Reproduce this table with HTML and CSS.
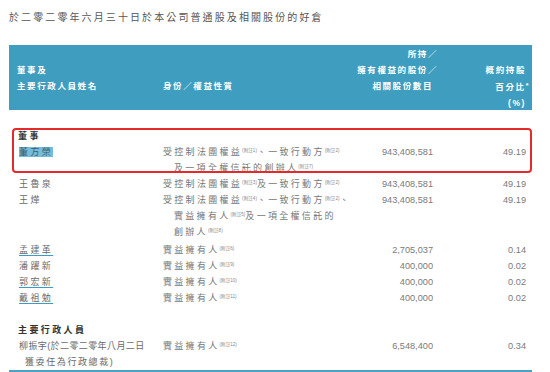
FILE: index.html
```html
<!DOCTYPE html>
<html lang="zh-Hant">
<head>
<meta charset="utf-8">
<link rel="stylesheet" href="styles.css">
</head>
<body>
<div class="sheet">
  <h1 class="title">於二零二零年六月三十日於本公司普通股及相關股份的好倉</h1>

  <div class="head">
    <div class="h-name">董事及<br>主要行政人員姓名</div>
    <div class="h-role">身份／權益性質</div>
    <div class="h-shares">所持<span class="sl">／</span><br>擁有權益的股份<span class="sl">／</span><br>相關股份數目</div>
    <div class="h-pct">概約持股<br>百分比<span class="ast">*</span><br>(%)</div>
  </div>

  <div class="body">
    <div class="section">董事</div>
    <div class="row">
      <div class="name"><span class="hl">董方榮</span></div>
      <div class="role">受控制法團權益<sup>(附註1)</sup>、一致行動方<sup>(附註2)</sup><br>及一項全權信託的創辦人<sup>(附註7)</sup></div>
      <div class="num">943,408,581</div>
      <div class="pct">49.19</div>
    </div>
    <div class="row">
      <div class="name">王魯泉</div>
      <div class="role">受控制法團權益<sup>(附註3)</sup>及一致行動方<sup>(附註2)</sup></div>
      <div class="num">943,408,581</div>
      <div class="pct">49.19</div>
    </div>
    <div class="row">
      <div class="name">王燁</div>
      <div class="role">受控制法團權益<sup>(附註4)</sup>、一致行動方<sup>(附註2)</sup>、<br>實益擁有人<sup>(附註5)</sup>及一項全權信託的<br>創辦人<sup>(附註8)</sup></div>
      <div class="num">943,408,581</div>
      <div class="pct">49.19</div>
    </div>
    <div class="row gap-top">
      <div class="name"><span class="ul">孟建革</span></div>
      <div class="role">實益擁有人<sup>(附註6)</sup></div>
      <div class="num">2,705,037</div>
      <div class="pct">0.14</div>
    </div>
    <div class="row">
      <div class="name">潘躍新</div>
      <div class="role">實益擁有人<sup>(附註9)</sup></div>
      <div class="num">400,000</div>
      <div class="pct">0.02</div>
    </div>
    <div class="row">
      <div class="name"><span class="ul">郭宏新</span></div>
      <div class="role">實益擁有人<sup>(附註10)</sup></div>
      <div class="num">400,000</div>
      <div class="pct">0.02</div>
    </div>
    <div class="row">
      <div class="name"><span class="ul">戴祖勉</span></div>
      <div class="role">實益擁有人<sup>(附註11)</sup></div>
      <div class="num">400,000</div>
      <div class="pct">0.02</div>
    </div>

    <div class="section section-2">主要行政人員</div>
    <div class="row">
      <div class="name name-long"><span class="tight">柳振宇(於二零二零年八月二日</span><br>獲委任為行政總裁)</div>
      <div class="role">實益擁有人<sup>(附註12)</sup></div>
      <div class="num">6,548,400</div>
      <div class="pct">0.34</div>
    </div>
  </div>

  <div class="mark"></div>
</div>
</body>
</html>
```

FILE: styles.css
```css
html, body {
  margin: 0;
  padding: 0;
  background: #ffffff;
}

body {
  font-family: "Liberation Sans", "Noto Sans CJK TC", sans-serif;
  color: #6f6f6f;
}

.sheet {
  position: relative;
  width: 550px;
  height: 372px;
  overflow: hidden;
}

.title {
  margin: 0;
  padding: 10px 0 0 9px;
  height: 16px;
  line-height: 16px;
  font-size: 10px;
  font-weight: normal;
  letter-spacing: 2.1px;
  color: #555555;
  white-space: nowrap;
}

.head {
  margin: 19px 18px 0 9px;
  height: 65px;
  box-sizing: border-box;
  padding-top: 1px;
  background: #3f9ebf;
  color: #ffffff;
  display: grid;
  grid-template-columns: 154px 180px 90px 93px;
  grid-template-rows: repeat(4, 16px);
  font-size: 8.5px;
  font-weight: bold;
  letter-spacing: 1.6px;
  line-height: 16px;
  white-space: nowrap;
}

.h-name {
  grid-column: 1;
  grid-row: 2 / span 2;
  padding-left: 8px;
}

.h-role {
  grid-column: 2;
  grid-row: 3;
}

.h-shares {
  grid-column: 3;
  grid-row: 1 / span 3;
  text-align: right;
}

.h-shares .sl {
  margin-right: -5px;
}

.h-pct {
  grid-column: 4;
  grid-row: 2 / span 3;
  text-align: right;
}

.h-pct .ast {
  margin-right: -4px;
  font-size: 7px;
  vertical-align: 2px;
}

.body {
  margin: 18px 18px 0 9px;
  border-bottom: 2px solid #4aa3c3;
  font-size: 9px;
  line-height: 16px;
}

.section {
  padding-left: 9px;
  font-weight: bold;
  color: #333333;
  letter-spacing: 2.4px;
}

.section-2 {
  margin-top: 16px;
}

.row {
  display: grid;
  grid-template-columns: 154px 180px 90px 93px;
  align-items: start;
  white-space: nowrap;
}

.gap-top {
  margin-top: 2px;
}

.name {
  padding-left: 10px;
  letter-spacing: 2.4px;
  color: #6a6a6a;
}

.name-long {
  padding-left: 16px;
  text-indent: -6px;
  letter-spacing: 1.6px;
}

.name-long .tight {
  letter-spacing: 0.4px;
}

.role {
  padding-left: 11px;
  text-indent: -11px;
  letter-spacing: 2.3px;
  color: #777777;
}

.num,
.pct {
  text-align: right;
  font-size: 9.2px;
  color: #7a7a7a;
}

sup {
  font-size: 4.6px;
  line-height: 0;
  vertical-align: 3px;
  letter-spacing: 0;
  color: #8a8a8a;
}

.hl {
  background: #74bcda;
  color: #3f5d6d;
}

.ul {
  text-decoration: underline;
  text-decoration-color: #3a9cc8;
  text-decoration-thickness: 1px;
  text-underline-offset: 2px;
}

.mark {
  position: absolute;
  left: 12px;
  top: 128px;
  width: 520px;
  height: 45px;
  box-sizing: border-box;
  border: 2px solid #e42a2a;
  border-radius: 4px;
}
```
